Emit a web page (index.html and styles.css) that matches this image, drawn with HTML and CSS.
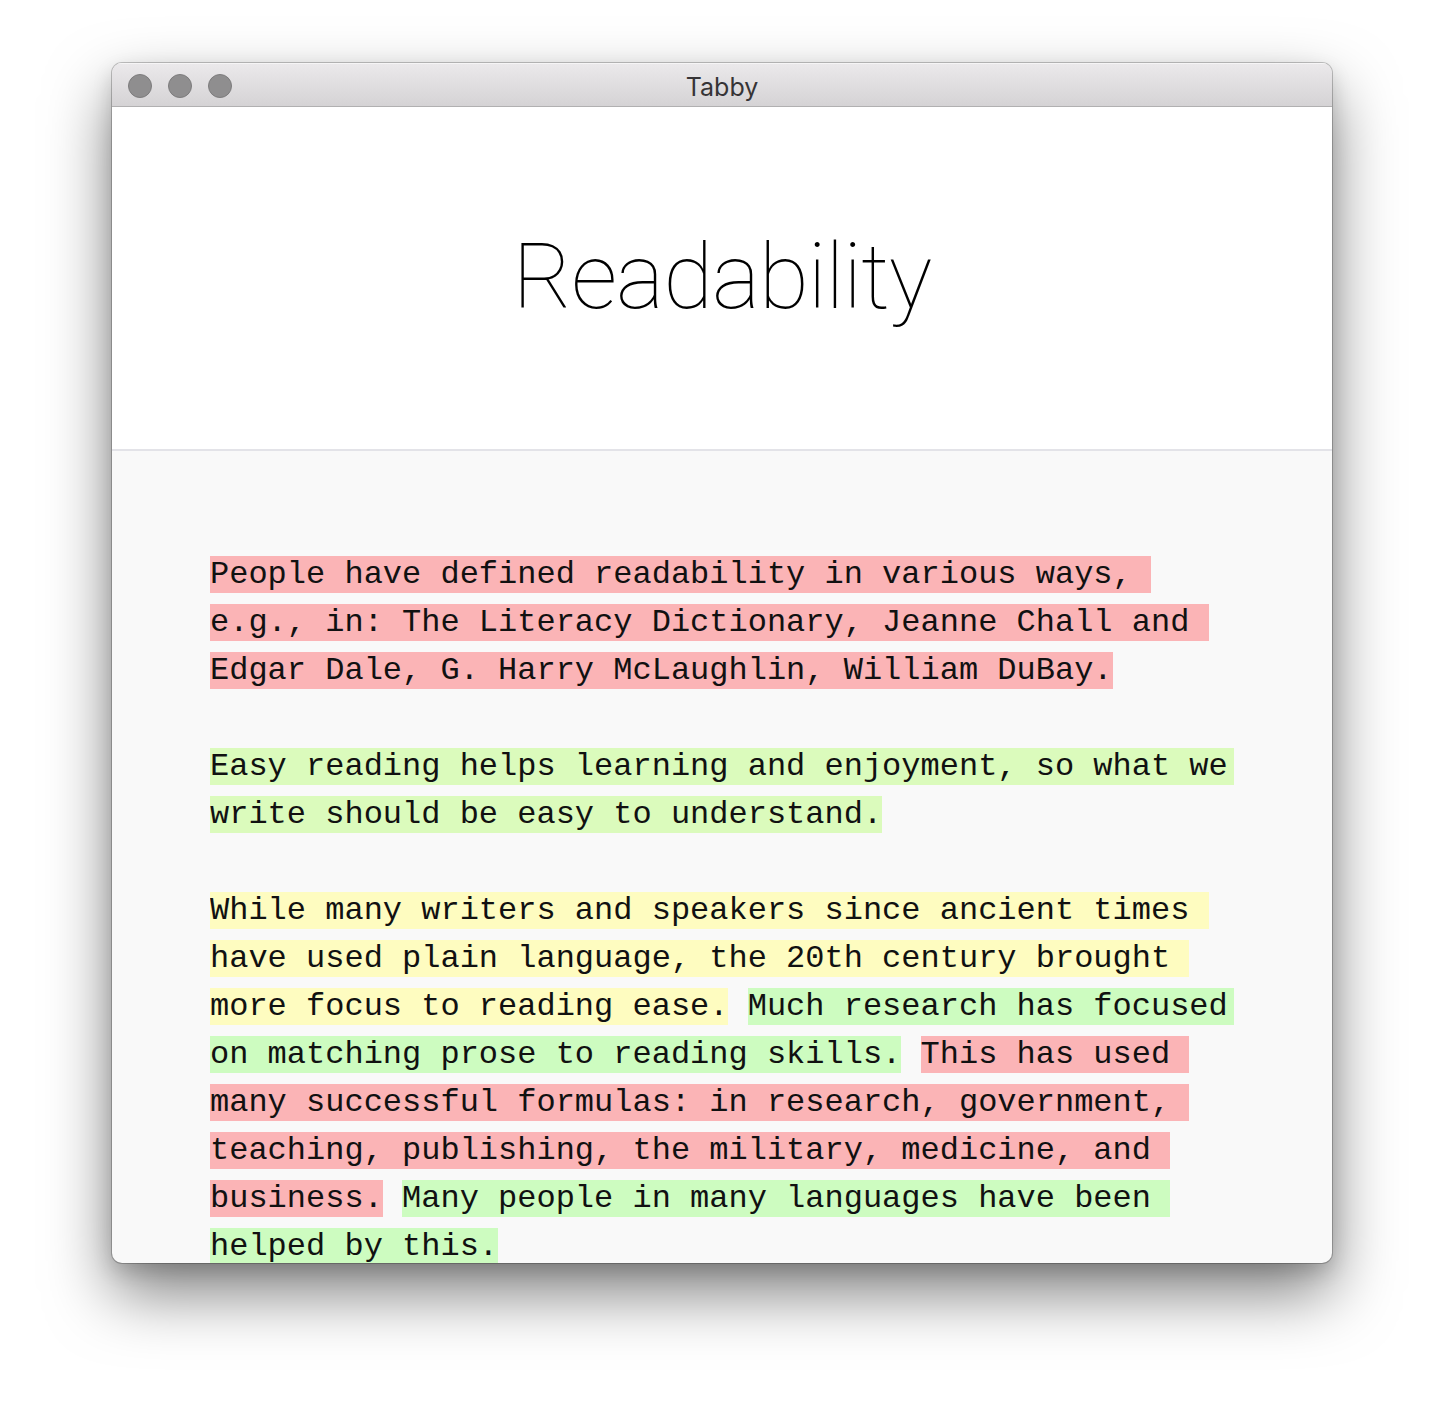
FILE: index.html
```html
<!DOCTYPE html>
<html>
<head>
<meta charset="utf-8">
<title>Tabby</title>
<link rel="stylesheet" href="styles.css">
</head>
<body>
<div class="window">
  <div class="titlebar">
    <div class="lights">
      <span class="light"></span>
      <span class="light"></span>
      <span class="light"></span>
    </div>
    <div class="wtitle">Tabby</div>
  </div>
  <header class="hero">
    <h1>Readability</h1>
  </header>
  <main class="content">
    <div class="text">
      <p><span class="hl red">People have defined readability in various ways, e.g., in: The Literacy Dictionary, Jeanne Chall and Edgar Dale, G. Harry McLaughlin, William DuBay.</span></p>
      <p><span class="hl lime">Easy reading helps learning and enjoyment, so what we write should be easy to understand.</span></p>
      <p><span class="hl yellow">While many writers and speakers since ancient times have used plain language, the 20th century brought more focus to reading ease.</span> <span class="hl green">Much research has focused on matching prose to reading skills.</span> <span class="hl red">This has used many successful formulas: in research, government, teaching, publishing, the military, medicine, and business.</span> <span class="hl green">Many people in many languages have been helped by this.</span></p>
    </div>
  </main>
</div>
</body>
</html>
```

FILE: styles.css
```css
html, body {
  margin: 0;
  padding: 0;
  background: #ffffff;
}
body {
  padding: 63px 112px 160px 112px;
}
.window {
  width: 1220px;
  height: 1200px;
  border-radius: 10px;
  overflow: hidden;
  display: flex;
  flex-direction: column;
  box-shadow: 0 0 0 1px rgba(0,0,0,0.22), 0 30px 64px rgba(0,0,0,0.5), 0 8px 20px rgba(0,0,0,0.15);
  background: #f9f9f9;
}
.titlebar {
  height: 43px;
  flex: none;
  display: flex;
  align-items: center;
  justify-content: center;
  position: relative;
  background: linear-gradient(#ebe9eb, #d5d3d5);
  border-bottom: 1px solid #b1b0b1;
  box-shadow: inset 0 1px 0 #f6f5f6;
}
.lights {
  position: absolute;
  left: 16px;
  top: 11px;
  display: flex;
  gap: 16px;
}
.light {
  width: 22px;
  height: 22px;
  border-radius: 50%;
  background: #8f8e8f;
  border: 1px solid #7d7c7d;
}
.wtitle {
  font-family: Inter, "Liberation Sans", sans-serif;
  font-size: 25px;
  color: #363436;
  padding-top: 4px;
}
.hero {
  flex: none;
  height: 342px;
  background: #ffffff;
  border-bottom: 2px solid #e3e3e8;
  display: flex;
  align-items: center;
  justify-content: center;
}
.hero h1 {
  margin: 0;
  font-family: Roboto, Inter, sans-serif;
  font-weight: 100;
  font-size: 91px;
  letter-spacing: -1px;
  color: #000;
  padding-bottom: 2px;
}
.content {
  flex: 1;
  min-height: 0;
  padding: 100px 98px 0 98px;
  font-family: "Courier New", "Nimbus Mono PS", "Nimbus Mono L", FreeMono, "Liberation Mono", monospace;
  font-size: 32px;
  line-height: 48px;
  color: #111;
}
.text {
  overflow: hidden;
}
.text p {
  margin: 0 0 48px 0;
}
.hl {
  white-space: pre-wrap;
}
.hl.red { background: #fbb4b6; }
.hl.lime { background: #dbfbbc; }
.hl.yellow { background: #fefcc0; }
.hl.green { background: #cdfcc0; }
```
